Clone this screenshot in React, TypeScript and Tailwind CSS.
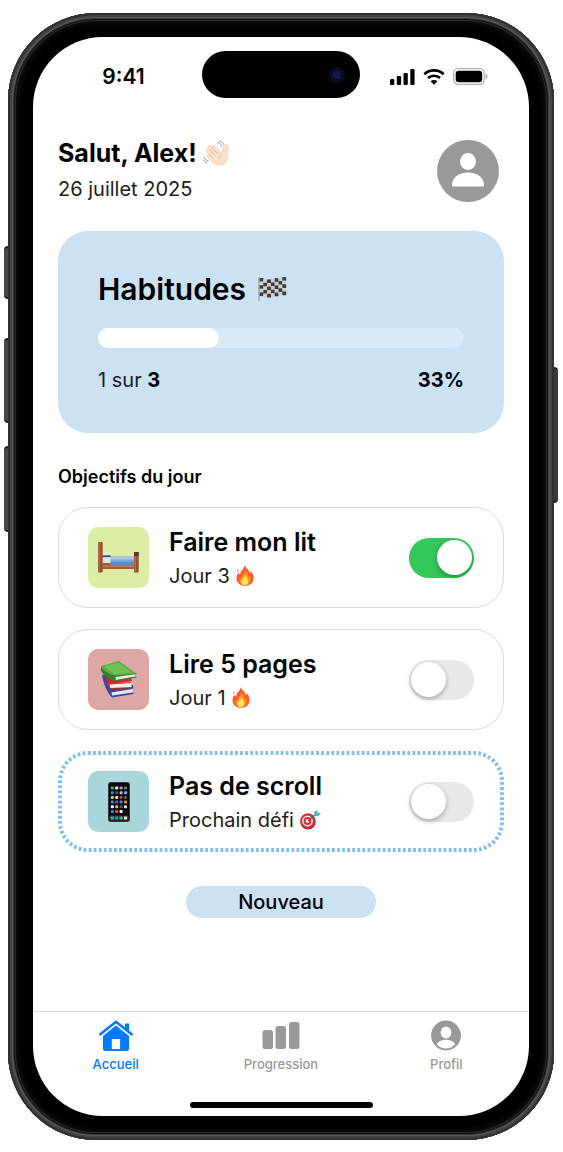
import React, { useState } from 'react';
import clsx from 'clsx';

type Goal = {
  id: string;
  title: string;
  note: string;
  noteIcon: React.ReactNode;
  icon: React.ReactNode;
  tile: string;
  upcoming?: boolean;
};

/* ---------- Emoji drawings ---------- */

const WaveIcon = () => (
  <svg width="27" height="27" viewBox="0 0 27 27" aria-hidden="true">
    <path
      d="M3.500 10c.6-1.300 2-1.200 3-.3L5.300 7.500C4.600 5.800 6.600 4.500 7.900 6l1 1.200C8.400 5 10.400 4 11.800 5.500l6.600 7.700c.7-1 .8-2.300 1.500-3.800.5-3.200 1-5.200 3.200-5 2 .2 2.400 2 2.200 4.300-.2 3.700-.3 8.300-1.500 11.500-1.300 3.500-4 5-7.300 5-3.600 0-6-1.800-8.500-4.500L4.500 16.500c-1.400-1.700.3-3.200 1.800-2L3.900 11.900c-.5-.6-.7-1.200-.4-1.900z"
      fill="#fbdfcd"
      stroke="#efc9b0"
      strokeWidth=".5"
    />
    <path d="M6.500 9.700l5.700 6M8.900 7.200l5.600 6.300M6.300 14.500l3.500 3.700M18.400 13.200c-1.500 1.300-2.200 3-1.800 5" stroke="#dfae8e" strokeWidth=".8" strokeLinecap="round" fill="none" />
    <path d="M14.500 2.500c2 .5 3.500 1.800 4.300 3.800M16.500 1c1.900.5 3.200 1.600 4 3.300M1.500 17.500c.8 1.700 2 2.900 3.800 3.600M.6 20c.8 1.500 1.800 2.400 3.300 3" stroke="#8d9399" strokeWidth="1" strokeLinecap="round" strokeDasharray="2 .6" fill="none" />
  </svg>
);

const FlagIcon = () => {
  const cells = [];
  for (let row = 0; row < 5; row++) {
    for (let col = 0; col < 7; col++) {
      const lift = [0, 1.2, 1.4, 0.9, 0.2, -0.5, -0.9][col];
      cells.push(
        <rect
          key={`${row}-${col}`}
          x={1.5 + col * 3.8}
          y={1 + row * 3.6 + lift}
          width="3.9"
          height="3.7"
          fill={(row + col) % 2 ? '#d0d0ce' : '#3c3c3c'}
        />
      );
    }
  }
  return (
    <svg width="29" height="24" viewBox="0 0 29 24" aria-hidden="true">
      {cells}
      <path d="M1 0v24" stroke="#8b9093" strokeWidth="1" />
    </svg>
  );
};

const FireIcon = () => (
  <svg width="18" height="21" viewBox="0 0 18 21" aria-hidden="true">
    <path d="M8.500 0c.8 3 5 4.500 5.200 8.500.8-.7 1-1.500.9-2.500C17 8.500 18 11 17.500 14c-.6 4-3.800 6.800-8.500 6.800C4 20.800.5 17.800.5 13.500.5 11 1.300 9 2.500 7.500c.2 1.200.6 2 1.500 2.500C4.200 5.500 8.500 4 8.500 0z" fill="#fd5b2b" />
    <path d="M9.500 5.500c1 2.500 3.200 4 3.200 7 .8-.3 1.200-.8 1.500-1.500 1.300 4.500-.8 9-5.200 9-4.200 0-6.500-3-5.500-7 .4.8 1 1.200 1.800 1.300C5 10.500 9 9.500 9.500 5.500z" fill="#ff9a1f" />
    <path d="M9.300 10c.6 2 2.700 3 2.700 6 0 2.500-1 4.300-3 4.300s-3.700-1.500-3.300-4.300C6 13.500 9 13 9.300 10z" fill="#ffe45c" />
    <path d="M1.500 4.500c1 .6 1 1.600.3 2.200-.8-.6-.9-1.300-.3-2.200zM4.500 4c.5 1 .3 1.700-.3 2.200" fill="#fd5b2b" />
  </svg>
);

const TargetIcon = () => (
  <svg width="21" height="20" viewBox="0 0 21 20" aria-hidden="true">
    <ellipse cx="8" cy="11.500" rx="7.700" ry="8" fill="#bd1e2c" />
    <ellipse cx="7.500" cy="10.800" rx="7.200" ry="7.400" fill="#dd3038" />
    <circle cx="7.500" cy="11" r="5.400" fill="#f3e9e8" />
    <circle cx="7.500" cy="11" r="3.900" fill="#d92f38" />
    <circle cx="7.500" cy="11" r="1.900" fill="#f3e9e8" />
    <path d="M8 11l8.500-7.500" stroke="#51585c" strokeWidth="1.200" />
    <path d="M14 5l.5-3.500L17.500 0v2.500L21 3l-2.500 3-4 .2z" fill="#55b9c4" />
  </svg>
);

const BedIcon = () => (
  <svg width="41" height="31" viewBox="0 0 41 31" aria-hidden="true">
    <path d="M4 21h34v6H4z" fill="#a85b35" />
    <path d="M4 23.500h34V25H4z" fill="#c27a4d" />
    <path d="M4 13c0-3 3-4 6-2.500 2 1 3 2.500 3 4.500v5H4z" fill="#dbe6ee" />
    <path d="M4 13.500l8-.3 1.500 1.800-9.500.3z" fill="#3f4a57" />
    <path d="M12.500 14.500H36V23c-8 1.500-16 1.500-23.500.5z" fill="#7fa3cf" />
    <path d="M12.500 14.500H36v3H12.500z" fill="#a9c6e6" />
    <path d="M12.500 20H36v3c-8 1.500-16 1.500-23.500.5z" fill="#6288b8" />
    <rect x="0" y="0" width="4.700" height="30.500" rx="1" fill="#9a5130" />
    <path d="M1.200 1v28" stroke="#c47b50" strokeWidth="1" />
    <rect x="36" y="10" width="4.700" height="20.500" rx="1" fill="#9a5130" />
    <path d="M36 10h4.700v4H36z" fill="#5f3427" />
    <path d="M37.200 14v15" stroke="#c47b50" strokeWidth="1" />
  </svg>
);

const BooksIcon = () => (
  <svg width="36" height="37" viewBox="0 0 36 37" aria-hidden="true">
    <path d="M1 14l5-1 4 14 22-3 .5 3.500L11 31.500l.5 3 21-3v1.500L11 36.500C7 33 2 22 1 14z" fill="#3549a6" />
    <path d="M10.500 31.500L32 28.500v2.500l-21 3.500z" fill="#ece8e6" />
    <path d="M5 14l25 1 1 5-23 3.500zM5 14l4 9 21-2v6L9 28C6 24 5 19 5 14z" fill="#d42a24" />
    <path d="M8.500 23.500L30.500 22v4l-21 1z" fill="#f0ecea" />
    <path d="M0 5L18 0l16.500 12L14 15C9 13 3 10 0 5z" fill="#58ad43" />
    <path d="M3 5.200L17.500 1.500 31 11.500 14 13.800z" fill="#6ec255" />
    <path d="M14 15.500L33.500 12.500v3L14.500 19.500z" fill="#e9eee6" />
    <path d="M0 5c3 5 8 8 14 9.800L35.500 12v1L14.500 16v3l21-3.500v1L14 20.500C8 18 2 14 0 9.500z" fill="#347e2c" />
  </svg>
);

const appColors = [
  ['#2fc553', '#e8e8e8', '#b58fd2', '#777'],
  ['#1695f0', '#555', '#ccb69c', '#3ec3e8'],
  ['#f2cd38', '#dfdfdf', '#c63b3b', '#555'],
  ['#22a9b5', '#a830cf', '#1695f0', '#f08318'],
  ['#f3f3f3', '#e9bd27', '#555', '#ddd'],
  ['#1695f0', '#dd4b42', '#f4f4f4', '#111'],
];

const PhoneIcon = () => (
  <svg width="22" height="40" viewBox="0 0 22 40" aria-hidden="true">
    <rect width="22" height="40" rx="3" fill="#34363a" />
    <rect x="1" y="1" width="20" height="38" rx="2" fill="#08090c" />
    {appColors.map((row, y) =>
      row.map((fill, x) => (
        <rect key={`${x}-${y}`} x={2.8 + x * 4.4} y={4.5 + y * 4.7} width="3" height="3" rx=".8" fill={fill} />
      ))
    )}
    <rect x="1.500" y="33.500" width="19" height="5" rx="1" fill="#34383b" />
    {['#2fc553', '#1695f0', '#2fc553', '#f4f4f4'].map((fill, x) => (
      <rect key={x} x={2.8 + x * 4.4} y="34.500" width="3" height="3" rx=".8" fill={fill} />
    ))}
  </svg>
);

/* ---------- Status bar icons ---------- */

const SignalIcon = () => (
  <svg width="25" height="16" viewBox="0 0 25 16" aria-label="Réseau">
    <rect x="0" y="10" width="4.300" height="6" rx="1.200" />
    <rect x="6.800" y="7" width="4.300" height="9" rx="1.200" />
    <rect x="13.500" y="4" width="4.300" height="12" rx="1.200" />
    <rect x="20.300" y="0" width="4.300" height="16" rx="1.200" />
  </svg>
);

const WifiIcon = () => (
  <svg width="22" height="16" viewBox="0 0 22 16" aria-label="Wi-Fi">
    <path d="M1.300 5.200C6.800.2 15.200.2 20.700 5.200" stroke="#000" strokeWidth="2.700" fill="none" />
    <path d="M5 9c3.400-3.100 8.600-3.100 12 0" stroke="#000" strokeWidth="2.600" fill="none" />
    <path d="M11 15.800l-3.400-3.500c1.900-1.700 4.900-1.700 6.800 0z" />
  </svg>
);

const BatteryIcon = () => (
  <svg width="35" height="17" viewBox="0 0 35 17" aria-label="Batterie">
    <rect x=".7" y=".7" width="30.500" height="15.600" rx="4.700" fill="none" stroke="#000" strokeOpacity=".3" strokeWidth="1.300" />
    <rect x="2.700" y="2.700" width="26.500" height="11.600" rx="3" />
    <path d="M32.600 5.800c2.600 1 2.600 4.400 0 5.400z" fillOpacity=".35" />
  </svg>
);

/* ---------- Navigation icons ---------- */

const HomeIcon = () => (
  <svg width="34" height="32" viewBox="0 0 34 32" fill="currentColor" aria-hidden="true">
    <path d="M1.300 14.300L17 1.700l15.700 12.600" fill="none" stroke="currentColor" strokeWidth="2.500" strokeLinecap="round" strokeLinejoin="round" />
    <path d="M26 3.500h4v9.500l-4-3.500z" />
    <path
      fillRule="evenodd"
      d="M17 5.500L30 16V28.500a2.500 2.500 0 0 1-2.500 2.500h-21A2.500 2.500 0 0 1 4 28.500V16zM12.800 19v10h8.300V19z"
    />
  </svg>
);

const BarsIcon = () => (
  <svg width="38" height="32" viewBox="0 0 38 32" fill="currentColor" aria-hidden="true">
    <rect x=".5" y="10" width="10.500" height="19" rx="2.500" />
    <rect x="13.500" y="6" width="10.500" height="23" rx="2.500" />
    <rect x="27" y="2" width="10.500" height="27" rx="2.500" />
  </svg>
);

const ProfileIcon = () => (
  <svg width="30" height="32" viewBox="0 0 30 32" aria-hidden="true">
    <circle cx="15" cy="15.500" r="14.900" fill="currentColor" />
    <ellipse cx="15" cy="12.500" rx="5.300" ry="5.900" fill="#fff" />
    <path d="M5.800 24.300c3-6 15.400-6 18.400 0-4.600 5.600-13.800 5.600-18.400 0z" fill="#fff" />
  </svg>
);

const AvatarIcon = () => (
  <svg width="62" height="62" viewBox="0 0 62 62" aria-hidden="true">
    <circle cx="31" cy="31" r="31" fill="#999" />
    <ellipse cx="31" cy="21.500" rx="7.900" ry="8.500" fill="#fff" />
    <path d="M15 45c0-7.500 7-12.500 16-12.500S47 37.500 47 45c0 1-.5 1.600-1.500 1.600h-29C15.500 46.600 15 46 15 45z" fill="#fff" />
  </svg>
);

const goals: Goal[] = [
  { id: 'lit', title: 'Faire mon lit', note: 'Jour 3', noteIcon: <FireIcon />, icon: <BedIcon />, tile: 'bg-[#dceea3]' },
  { id: 'pages', title: 'Lire 5 pages', note: 'Jour 1', noteIcon: <FireIcon />, icon: <BooksIcon />, tile: 'bg-[#dfa6a6]' },
  { id: 'scroll', title: 'Pas de scroll', note: 'Prochain défi', noteIcon: <TargetIcon />, icon: <PhoneIcon />, tile: 'bg-[#a8d6da]', upcoming: true },
];

const tabs = [
  { label: 'Accueil', icon: <HomeIcon />, active: true },
  { label: 'Progression', icon: <BarsIcon />, active: false },
  { label: 'Profil', icon: <ProfileIcon />, active: false },
];

const StatusBar = () => (
  <div className="grid grid-cols-[1fr_158px_1fr] items-center pt-[14px]">
    <span className="pt-1 pl-3 text-center text-[21px] leading-6 font-semibold">9:41</span>
    <div className="flex h-[47px] items-center justify-end rounded-full bg-black pr-[15px]">
      <div className="flex size-4 items-center justify-center rounded-full bg-[#0b0920]">
        <div className="size-2 rounded-full bg-[#15154f]" />
      </div>
    </div>
    <div className="flex items-center justify-center gap-2 pt-1 pr-3">
      <SignalIcon />
      <WifiIcon />
      <BatteryIcon />
    </div>
  </div>
);

const GoalCard = ({ goal, done, onToggle }: { goal: Goal; done: boolean; onToggle: () => void }) => (
  <li
    className={clsx(
      'relative flex items-center gap-5 rounded-[30px] border px-[29px] py-[19px]',
      goal.upcoming ? 'border-transparent' : 'border-[#dcdcdc]'
    )}
  >
    {goal.upcoming && (
      <svg className="pointer-events-none absolute -inset-px size-[calc(100%+2px)]" aria-hidden="true">
        <rect
          x="2"
          y="2"
          rx="28"
          className="h-[calc(100%-4px)] w-[calc(100%-4px)]"
          fill="none"
          stroke="#82bff0"
          strokeWidth="4"
          strokeDasharray="2.800 2.270"
        />
      </svg>
    )}
    <div className={clsx('flex size-[61px] shrink-0 items-center justify-center rounded-[10px]', goal.tile)}>{goal.icon}</div>
    <div className="min-w-0 flex-1">
      <label htmlFor={goal.id} className="block text-[25px] leading-7 font-semibold">{goal.title}</label>
      <p className="mt-2 flex items-center gap-[6px] text-xl leading-6 text-[#1c1c1c]">
        {goal.note}
        {goal.noteIcon}
      </p>
    </div>
    <input
      id={goal.id}
      type="checkbox"
      role="switch"
      checked={done}
      onChange={onToggle}
      className="flex h-10 w-[65px] shrink-0 cursor-pointer appearance-none items-center rounded-full bg-[#e9e9e9] px-[2px] before:size-[35px] before:rounded-full before:bg-white before:shadow-[0_2px_5px_rgba(0,0,0,0.3)] checked:justify-end checked:bg-[#34c759]"
    />
  </li>
);

export default function App() {
  const [done, setDone] = useState<Record<string, boolean>>({ lit: true });
  const count = goals.filter((goal) => done[goal.id]).length;
  const percent = Math.floor((count / goals.length) * 100);

  const toggle = (id: string) => setDone((prev) => ({ ...prev, [id]: !prev[id] }));

  return (
    <div className="flex bg-white py-[13px] pr-[5px] pl-1 font-['Inter',sans-serif] text-black">
      {/* Left side buttons */}
      <div className="flex w-1 shrink-0 flex-col pt-[233px]">
        <div className="h-[53px] rounded-l-sm border-y-2 border-[#1b1c1c] bg-[#454848]" />
        <div className="mt-[39px] h-[85px] rounded-l-sm border-y-2 border-[#1b1c1c] bg-[#454848]" />
        <div className="mt-[23px] h-[86px] rounded-l-sm border-y-2 border-[#1b1c1c] bg-[#454848]" />
      </div>

      {/* Phone body */}
      <div className="min-w-0 flex-1 rounded-[88px] bg-black px-[25px] py-6 shadow-[inset_0_0_0_2px_#303131,inset_0_0_0_4px_#434444,inset_0_0_0_5px_#5c5c5c,inset_0_0_0_6px_#343535,inset_0_0_0_7px_#111,inset_0_0_0_8px_#2b2b2b,inset_0_0_8px_8px_#1a1a1a]">
        <div className="overflow-hidden rounded-[70px] bg-white">
          <StatusBar />

          <main className="px-[25px] pt-[37px]">
            <header className="flex items-center justify-between pr-[5px]">
              <div>
                <h1 className="flex items-center gap-[6px] text-[25px] leading-9 font-bold">
                  Salut, Alex!
                  <WaveIcon />
                </h1>
                <p className="text-xl leading-9 text-[#1c1c1c]">26 juillet 2025</p>
              </div>
              <button type="button" aria-label="Mon profil" className="rounded-full">
                <AvatarIcon />
              </button>
            </header>

            <section className="mt-6 rounded-[30px] bg-[#cbe1f4] px-10 pt-10 pb-[41px]">
              <h2 className="flex items-center gap-3 text-3xl leading-9 font-semibold">
                Habitudes
                <FlagIcon />
              </h2>
              <div
                role="progressbar"
                aria-valuenow={percent}
                aria-label="Habitudes"
                className="mt-[21px] h-5 rounded-full bg-[#d8e9f7]"
              >
                <div className="h-full rounded-full bg-white" style={{ width: `${percent}%` }} />
              </div>
              <div className="mt-5 flex justify-between text-xl leading-6">
                <p className="text-[#1c1c1c]">
                  {count} sur <strong className="font-bold text-black">{goals.length}</strong>
                </p>
                <p className="font-bold">{percent}%</p>
              </div>
            </section>

            <h2 className="mt-8 text-lg leading-6 font-semibold">Objectifs du jour</h2>
            <ul className="mt-[18px] flex flex-col gap-[21px]">
              {goals.map((goal) => (
                <GoalCard key={goal.id} goal={goal} done={!!done[goal.id]} onToggle={() => toggle(goal.id)} />
              ))}
            </ul>

            <button type="button" className="mx-auto mt-[34px] block h-8 w-[190px] rounded-full bg-[#cbe1f4] text-xl leading-8 font-medium">
              Nouveau
            </button>
          </main>

          <nav className="mt-[93px] grid grid-cols-3 border-t border-[#dedede] pt-2">
            {tabs.map((tab) => (
              <a
                key={tab.label}
                href="#"
                className={clsx(
                  'flex flex-col items-center gap-[2px] text-[13px] leading-5 font-medium',
                  tab.active ? 'text-[#007aff]' : 'text-[#999]'
                )}
              >
                {tab.icon}
                {tab.label}
              </a>
            ))}
          </nav>
          <div className="mx-auto mt-7 mb-2 h-[6px] w-[183px] rounded-full bg-black" />
        </div>
      </div>

      {/* Power button */}
      <div className="w-1 shrink-0 pt-[354px]">
        <div className="h-[136px] rounded-r-sm border-y-2 border-[#1b1c1c] bg-[#3a3c3c]" />
      </div>
    </div>
  );
}
